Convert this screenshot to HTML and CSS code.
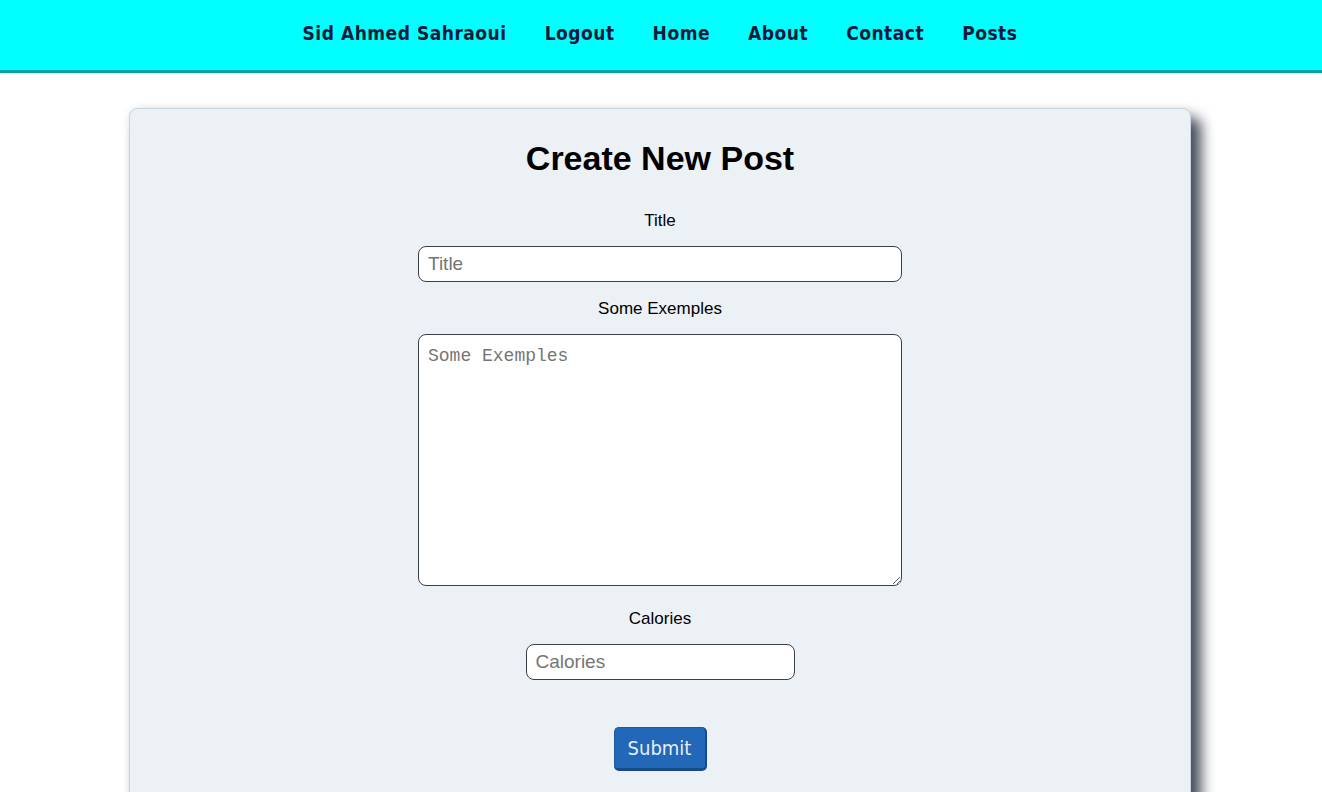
FILE: index.html
```html
<!DOCTYPE html>
<html lang="en">
<head>
<meta charset="utf-8">
<title>Create New Post</title>
<link rel="stylesheet" href="styles.css">
</head>
<body>
<nav class="topnav">
  <ul class="nav-list">
    <li><a href="#">Sid Ahmed Sahraoui</a></li>
    <li><a href="#">Logout</a></li>
    <li><a href="#">Home</a></li>
    <li><a href="#">About</a></li>
    <li><a href="#">Contact</a></li>
    <li><a href="#">Posts</a></li>
  </ul>
</nav>
<main class="card">
  <h1 class="card-title">Create New Post</h1>
  <form class="post-form">
    <label class="field-label" for="title">Title</label>
    <input class="field-input field-title" id="title" type="text" placeholder="Title">
    <label class="field-label" for="ex">Some Exemples</label>
    <textarea class="field-textarea" id="ex" placeholder="Some Exemples"></textarea>
    <label class="field-label" for="cal">Calories</label>
    <input class="field-input field-cal" id="cal" type="text" placeholder="Calories">
    <button class="submit-btn" type="button">Submit</button>
  </form>
</main>
</body>
</html>
```
FILE: styles.css
```css
html, body {
  margin: 0;
  padding: 0;
  background: #ffffff;
  font-family: "Liberation Sans", Arial, sans-serif;
}
.topnav {
  background: #00ffff;
  height: 70px;
  border-bottom: 3px solid #00a3a3;
  display: flex;
  align-items: center;
  justify-content: center;
}
.nav-list {
  list-style: none;
  margin: 0 0 0 -2px;
  padding: 0 0 5px 0;
  display: flex;
  gap: 38px;
}
.nav-list a {
  font-family: "DejaVu Sans", sans-serif;
  font-stretch: condensed;
  font-weight: 700;
  font-size: 19px;
  letter-spacing: 0.5px;
  color: #161a3a;
  text-decoration: none;
}
.card {
  box-sizing: border-box;
  width: 1062px;
  margin: 35px auto 0;
  background: #ecf1f6;
  border: 1px solid #c8d4e2;
  border-radius: 8px;
  box-shadow: 10px 10px 14px #444a58, 0 0 8px rgba(0,0,0,0.08);
  padding: 0 0 40px;
  display: flex;
  flex-direction: column;
  align-items: center;
  min-height: 700px;
  position: relative;
  left: -1px;
}
.card-title {
  margin: 30px 0 33px;
  font-size: 34px;
  font-weight: 700;
  color: #000;
  line-height: 39px;
}
.post-form {
  display: flex;
  flex-direction: column;
  align-items: center;
}
.field-label {
  font-size: 17px;
  line-height: 20px;
  color: #000;
  margin-bottom: 15px;
}
.field-input {
  box-sizing: border-box;
  height: 36px;
  border: 1px solid #3c3f48;
  border-radius: 8px;
  background: #fff;
  font-family: "Liberation Sans", Arial, sans-serif;
  font-size: 19px;
  padding: 0 9px;
  margin: 0 0 17px;
}
.field-input::placeholder,
.field-textarea::placeholder {
  color: #757575;
}
.field-title {
  width: 484px;
}
.field-cal {
  width: 269px;
  margin-bottom: 47px;
}
.field-textarea {
  box-sizing: border-box;
  width: 484px;
  height: 252px;
  border: 1px solid #3c3f48;
  border-radius: 8px;
  background: #fff;
  font-family: "Liberation Mono", monospace;
  font-size: 18px;
  padding: 11px 9px;
  margin: 0 0 23px;
}
.submit-btn {
  box-sizing: border-box;
  width: 93px;
  height: 44px;
  background: #2267b8;
  color: #e6eef6;
  border: 1px solid #1d5aa0;
  border-right: 2px solid #174a86;
  border-bottom: 3px solid #174a86;
  border-radius: 5px;
  font-family: "DejaVu Sans", sans-serif;
  font-stretch: condensed;
  font-size: 20px;
  padding: 0;
}
```
